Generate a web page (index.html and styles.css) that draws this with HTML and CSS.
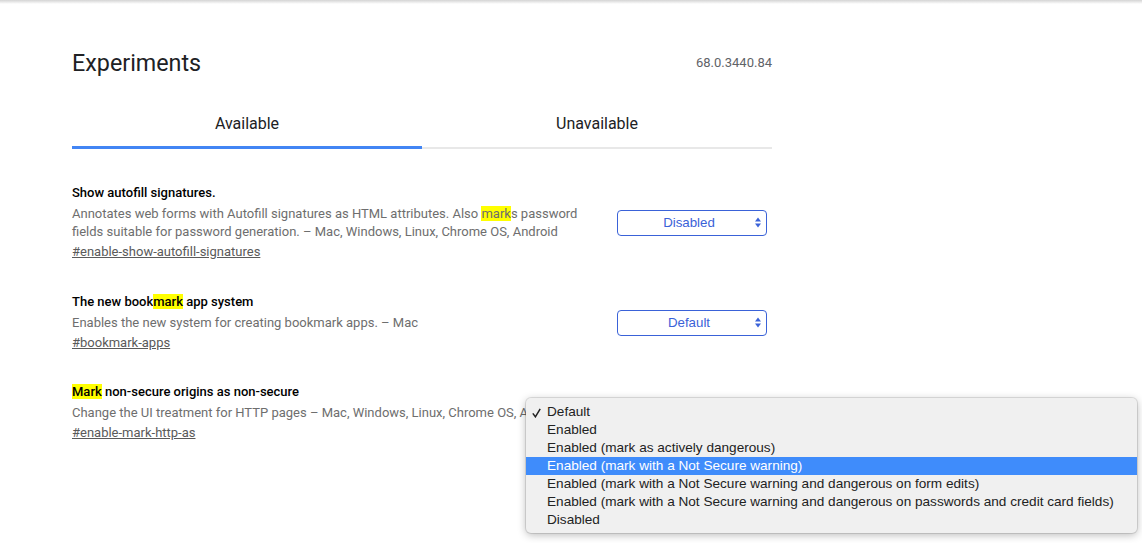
FILE: index.html
```html
<!DOCTYPE html>
<html>
<head>
<meta charset="utf-8">
<title>Experiments</title>
<link rel="stylesheet" href="styles.css">
</head>
<body>
<div class="topbar"></div>
<div class="page">
  <div class="header">
    <h1 class="title">Experiments</h1>
    <span class="version">68.0.3440.84</span>
  </div>
  <div class="tabs">
    <div class="tab active">Available</div>
    <div class="tab">Unavailable</div>
  </div>
  <div class="experiments">
    <div class="exp">
      <div class="exp-text">
        <div class="exp-name">Show autofill signatures.</div>
        <p class="exp-desc">Annotates web forms with Autofill signatures as HTML attributes. Also <mark class="hl">mark</mark>s password fields suitable for password generation. – Mac, Windows, Linux, Chrome OS, Android</p>
        <div class="exp-link-row"><a class="exp-link" href="#">#enable-show-autofill-signatures</a></div>
      </div>
      <div class="select"><span class="select-label">Disabled</span><svg class="arrows" width="6" height="11" viewBox="0 0 6 11"><path d="M0 4.5 L3 0.5 L6 4.5 Z M0 6.5 L3 10.5 L6 6.5 Z" fill="#3a62d8"/></svg></div>
    </div>
    <div class="exp tight">
      <div class="exp-text">
        <div class="exp-name">The new book<mark class="hl">mark</mark> app system</div>
        <p class="exp-desc">Enables the new system for creating bookmark apps. – Mac</p>
        <div class="exp-link-row"><a class="exp-link" href="#">#bookmark-apps</a></div>
      </div>
      <div class="select"><span class="select-label">Default</span><svg class="arrows" width="6" height="11" viewBox="0 0 6 11"><path d="M0 4.5 L3 0.5 L6 4.5 Z M0 6.5 L3 10.5 L6 6.5 Z" fill="#3a62d8"/></svg></div>
    </div>
    <div class="exp">
      <div class="exp-text">
        <div class="exp-name"><mark class="hl">Mark</mark> non-secure origins as non-secure</div>
        <p class="exp-desc">Change the UI treatment for HTTP pages – Mac, Windows, Linux, Chrome OS, Android</p>
        <div class="exp-link-row"><a class="exp-link" href="#">#enable-mark-http-as</a></div>
      </div>
      <div class="select focused"><span class="select-label">Default</span><svg class="arrows" width="6" height="11" viewBox="0 0 6 11"><path d="M0 4.5 L3 0.5 L6 4.5 Z M0 6.5 L3 10.5 L6 6.5 Z" fill="#3a62d8"/></svg></div>
    </div>
  </div>
</div>
<div class="menu">
  <div class="item"><svg class="check" width="9" height="10" viewBox="0 0 9 10"><path d="M0.8 5.4 L3.4 8.8 L8.2 0.8" fill="none" stroke="#222" stroke-width="1.5"/></svg>Default</div>
  <div class="item">Enabled</div>
  <div class="item">Enabled (mark as actively dangerous)</div>
  <div class="item selected">Enabled (mark with a Not Secure warning)</div>
  <div class="item">Enabled (mark with a Not Secure warning and dangerous on form edits)</div>
  <div class="item">Enabled (mark with a Not Secure warning and dangerous on passwords and credit card fields)</div>
  <div class="item">Disabled</div>
</div>
</body>
</html>
```
FILE: styles.css
```css
html, body {
  margin: 0;
  padding: 0;
  background: #ffffff;
}
body {
  font-family: Roboto, "Liberation Sans", sans-serif;
  color: #202124;
  position: relative;
  min-height: 543px;
  overflow: hidden;
}
.topbar {
  height: 4px;
  background: linear-gradient(#d4d4d4, #ffffff);
}
.page {
  width: 700px;
  margin-left: 72px;
}
.header {
  margin-top: 43px;
  display: flex;
  justify-content: space-between;
  align-items: center;
  height: 32px;
}
.title {
  margin: 0;
  font-size: 23.3px;
  font-weight: 400;
  line-height: 32px;
  color: #202124;
}
.version {
  font-size: 13px;
  color: #5f6368;
  line-height: 18px;
}
.tabs {
  margin-top: 35px;
  display: flex;
  align-items: flex-start;
}
.tab {
  flex: 1;
  text-align: center;
  font-size: 16px;
  line-height: 20px;
  color: #202124;
  padding-bottom: 13px;
  border-bottom: 2px solid #e8e8e8;
}
.tab.active {
  padding-bottom: 12px;
  border-bottom: 3px solid #4285f4;
}
.experiments {
  padding-top: 35px;
}
.exp {
  display: flex;
  align-items: center;
  margin-bottom: 32px;
}
.exp.tight {
  margin-bottom: 31px;
}
.exp-text {
  flex: 0 0 520px;
  font-size: 13px;
}
.exp-name {
  font-weight: 500;
  line-height: 18px;
  color: #000000;
}
.exp-desc {
  margin: 3px 0 0;
  line-height: 18px;
  color: #6e6e6e;
}
.exp-link-row {
  margin-top: 2px;
  line-height: 18px;
}
.exp-link {
  color: #5a5a5a;
  text-decoration: underline;
}
.hl {
  background: #ffff00;
  color: inherit;
}
.select {
  margin-left: auto;
  margin-right: 5px;
  width: 150px;
  height: 26px;
  box-sizing: border-box;
  border: 1px solid #3a62d8;
  border-radius: 4px;
  display: flex;
  align-items: center;
  padding: 0 5px 0 8px;
  font-family: "Liberation Sans", Arial, sans-serif;
  font-size: 13.3px;
  color: #3a62d8;
}
.select.focused {
  box-shadow: 0 0 0 2px #7fa5ee;
}
.select-label {
  flex: 1;
  text-align: center;
  padding-right: 3px;
}
.arrows {
  display: block;
}
.menu {
  position: absolute;
  left: 526px;
  top: 398px;
  width: 611px;
  box-sizing: border-box;
  padding: 5px 0 4px;
  background: #f0f0f0;
  border-radius: 5px;
  box-shadow: 0 0 0 1px rgba(0, 0, 0, 0.1), 0 2px 8px rgba(0, 0, 0, 0.28);
  font-family: "Liberation Sans", Arial, sans-serif;
  font-size: 13.6px;
  color: #222222;
}
.item {
  position: relative;
  height: 18px;
  line-height: 18px;
  padding-left: 21px;
  white-space: nowrap;
}
.item.selected {
  background: #3f8cfb;
  color: #ffffff;
}
.check {
  position: absolute;
  left: 6px;
  top: 5px;
}
```
